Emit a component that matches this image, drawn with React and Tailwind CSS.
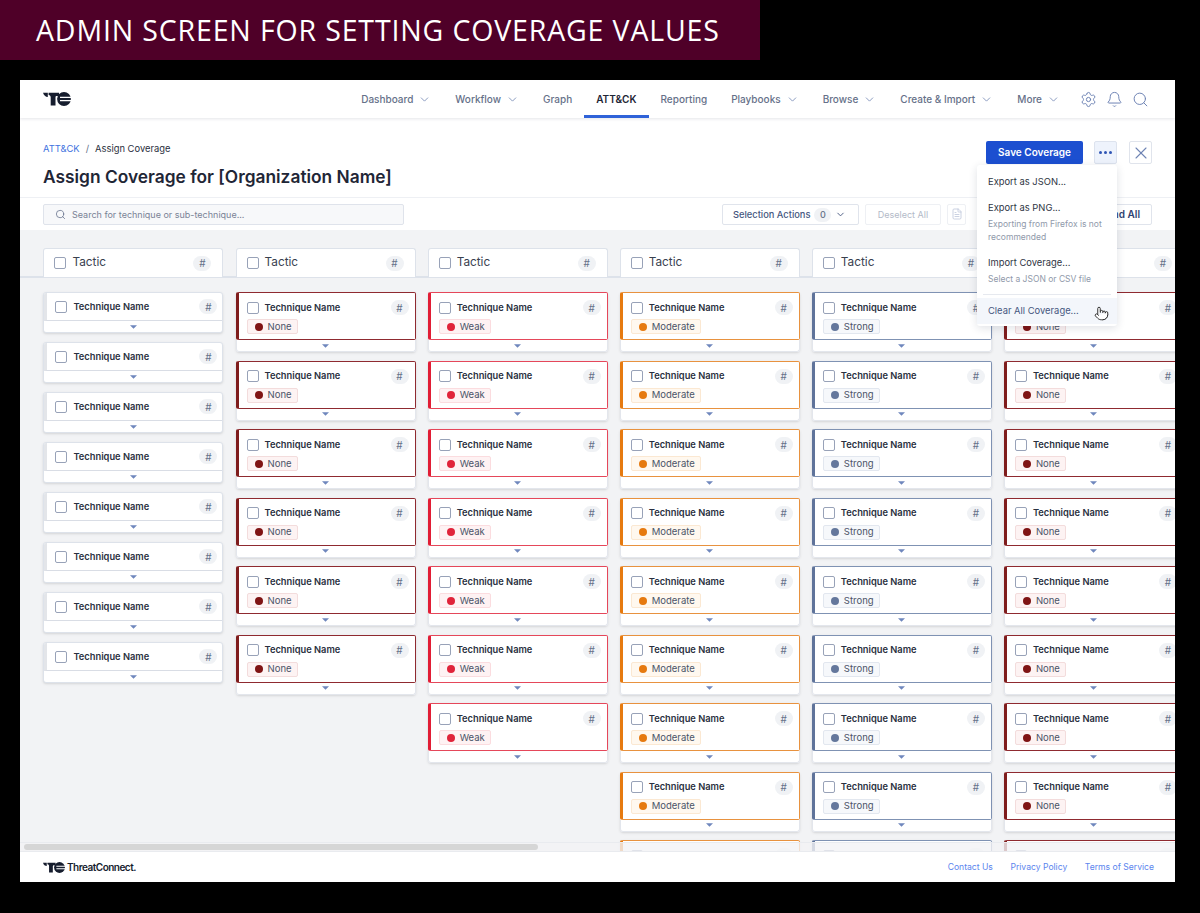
import { ChevronDown, Search, Settings, Bell, X, Pointer, FileText } from 'lucide-react';

const NAV = [
  { label: 'Dashboard', caret: true },
  { label: 'Workflow', caret: true },
  { label: 'Graph' },
  { label: 'ATT&CK', active: true },
  { label: 'Reporting' },
  { label: 'Playbooks', caret: true },
  { label: 'Browse', caret: true },
  { label: 'Create & Import', caret: true },
  { label: 'More', caret: true },
];

const LEVELS = {
  empty: null,
  None: {
    card: 'border-[#8f2a30]',
    bar: 'border-l-[#7f1d1d]',
    dot: 'bg-[#7f1414]',
    pill: 'bg-[#fdf3f3] border-[#f3dcdc]',
  },
  Weak: {
    card: 'border-[#e5475a]',
    bar: 'border-l-[#e11d35]',
    dot: 'bg-[#e0243a]',
    pill: 'bg-[#fef2f3] border-[#fbdcdf]',
  },
  Moderate: {
    card: 'border-[#e8923f]',
    bar: 'border-l-[#e67a10]',
    dot: 'bg-[#e67a10]',
    pill: 'bg-[#fff8ef] border-[#fbe8d2]',
  },
  Strong: {
    card: 'border-[#7f92b3]',
    bar: 'border-l-[#5f739a]',
    dot: 'bg-[#64779c]',
    pill: 'bg-[#f6f8fb] border-[#e2e7ef]',
  },
};

const COLUMNS = [
  { level: 'empty', count: 8 },
  { level: 'None', count: 6 },
  { level: 'Weak', count: 7 },
  { level: 'Moderate', count: 9 },
  { level: 'Strong', count: 9 },
  { level: 'None', count: 9 },
];

function Logo({ className }) {
  return (
    <svg viewBox="0 0 28 14" className={className}>
      <path fill="#161d2e" d="M0 .8h4.800v4.200C2.600 5 .8 3.400 0 .8z" />
      <path fill="#161d2e" d="M5.600 .8H16v3.200h-2.300c-.8 0-1.200.5-1.200 1.300V13.500H7.700V5.300C7.700 4 7 3.200 5.600 3z" />
      <circle fill="#161d2e" cx="21" cy="7" r="6.900" />
      <path fill="#ffffff" d="M17 4.700H29V5.900H17zM17 8.100H29V9.300H17z" />
    </svg>
  );
}

function Checkbox({ size = 'w-3 h-3' }) {
  return <span className={`${size} shrink-0 rounded-[2px] border border-[#98a2b8] bg-white`} />;
}

function Hash({ size = 'w-[18px] h-[15px]' }) {
  return (
    <span className={`${size} shrink-0 rounded-full bg-[#f0f2f5] flex items-center justify-center text-[10px] leading-none text-[#667189]`}>
      #
    </span>
  );
}

function Expander() {
  return (
    <svg viewBox="0 0 8 4" className="w-[7px] h-[4px]" fill="#6f87bd">
      <path d="M0 0h8L4 4z" />
    </svg>
  );
}

function TechniqueCard({ level }) {
  const style = LEVELS[level];

  if (!style) {
    return (
      <div className="h-[41px] flex flex-col rounded-[3px] bg-white border border-[#dde2ea] shadow-sm overflow-hidden">
        <div className="h-[28px] shrink-0 flex items-center border-l-[3px] border-l-[#e3e5e9] border-b border-b-[#d9dde5] pl-[8px] pr-[5px]">
          <Checkbox />
          <span className="ml-[6px] flex-1 text-[9.300px] font-semibold text-[#2a3040] whitespace-nowrap">Technique Name</span>
          <Hash />
        </div>
        <div className="flex-1 flex items-center justify-center">
          <Expander />
        </div>
      </div>
    );
  }

  return (
    <div className="h-[60px] flex flex-col rounded-[3px] bg-white shadow-sm shrink-0">
      <div className={`h-[48px] shrink-0 rounded-[2px] border border-l-[3px] ${style.card} ${style.bar} pl-[8px] pr-[6px] pt-[7px]`}>
        <div className="flex items-center h-[15px]">
          <Checkbox />
          <span className="ml-[6px] flex-1 text-[9.300px] font-semibold text-[#2a3040] whitespace-nowrap">Technique Name</span>
          <Hash />
        </div>
        <div className={`mt-[4px] flex w-fit items-center h-[15px] pl-[7px] pr-[5px] gap-[5px] rounded-[2px] border ${style.pill}`}>
          <span className={`w-2 h-2 rounded-full ${style.dot}`} />
          <span className="text-[9.500px] leading-none text-[#4b5468]">{level}</span>
        </div>
      </div>
      <div className="flex-1 flex items-center justify-center border-x border-b border-[#e3e6ec] rounded-b-[3px]">
        <Expander />
      </div>
    </div>
  );
}

function Column({ level, count }) {
  const items = Array.from({ length: count }, (_, i) => i);
  return (
    <div className="w-[180px] shrink-0 flex flex-col">
      <div className="h-[29px] shrink-0 flex items-center rounded-t-[3px] border border-b-0 border-[#dde2ea] bg-white pl-[10px] pr-[11px]">
        <Checkbox size="w-[12px] h-[12px]" />
        <span className="ml-[6px] flex-1 text-[11.800px] text-[#39414f]">Tactic</span>
        <Hash />
      </div>
      <div className={`mt-[15px] flex flex-col ${level === 'empty' ? 'gap-[9px]' : 'gap-[8.500px]'}`}>
        {items.map((i) => (
          <TechniqueCard key={i} level={level} />
        ))}
      </div>
    </div>
  );
}

function MenuItem({ title, note, hover }) {
  return (
    <div className={`px-[11px] whitespace-nowrap ${hover ? 'bg-[#f3f6fb] py-[7px] text-[#46577f]' : 'text-[#2f3644]'}`}>
      <div className="text-[9.400px] leading-[12px]">{title}</div>
      {note && <div className="mt-[4px] text-[8.500px] leading-[13px] text-[#9099aa]">{note}</div>}
    </div>
  );
}

export default function App() {
  return (
    <div className="w-[1200px] h-[913px] bg-black overflow-hidden font-['Inter',sans-serif]">
      <div className="w-[760px] h-[60px] bg-[#4f0028] pl-[36px] flex items-center">
        <span className="text-[28.500px] leading-none text-white whitespace-nowrap font-['Open_Sans',sans-serif] tracking-[0.85px]">
          ADMIN SCREEN FOR SETTING COVERAGE VALUES
        </span>
      </div>

      <div className="relative mt-[20px] ml-[20px] w-[1155px] h-[802px] bg-white overflow-hidden flex flex-col">
        {/* top nav */}
        <header className="relative z-10 h-[38px] shrink-0 bg-white shadow-[0_1px_3px_rgba(30,40,70,0.12)] flex items-center pl-[23px] pr-[26px]">
          <Logo className="w-[28px] h-[14px]" />
          <nav className="ml-auto flex items-stretch h-full">
            {NAV.map((item) => (
              <div
                key={item.label}
                className={`flex items-center gap-[5px] px-[12px] pt-[3px] text-[10px] font-medium border-b-[3px] ${
                  item.active ? 'border-[#2f62d8] text-[#1f2636] font-semibold' : 'border-transparent text-[#667189]'
                }`}
              >
                {item.label}
                {item.caret && <ChevronDown size={13} strokeWidth={1.5} className="text-[#7186b3]" />}
              </div>
            ))}
          </nav>
          <div className="flex items-center gap-[9px] ml-[8px] text-[#6e84b4]">
            <Settings size={17} strokeWidth={1.4} />
            <Bell size={17} strokeWidth={1.4} />
            <Search size={17} strokeWidth={1.4} />
          </div>
        </header>

        {/* page title */}
        <div className="h-[80px] shrink-0 border-b border-[#eef0f4] px-[23px] flex justify-between">
          <div className="pt-[25px]">
            <div className="flex items-center text-[9.400px] leading-[12px]">
              <span className="text-[#3f73e0]">ATT&amp;CK</span>
              <span className="mx-[6px] text-[#667189]">/</span>
              <span className="text-[#2a3040]">Assign Coverage</span>
            </div>
            <h1 className="mt-[11px] text-[17.350px] leading-[22px] font-semibold text-[#1f2636]">
              Assign Coverage for [Organization Name]
            </h1>
          </div>
          <div className="pt-[23px] flex items-start">
            <button className="h-[23px] w-[97px] rounded-[2px] bg-[#1c4fd0] text-white text-[10px] font-semibold">
              Save Coverage
            </button>
            <button className="ml-[11px] h-[23px] w-[23px] rounded-[2px] border border-[#dde3ee] bg-[#eef3fc] flex items-center justify-center gap-[2px]">
              <span className="w-[3px] h-[3px] rounded-full bg-[#2f55b5]" />
              <span className="w-[3px] h-[3px] rounded-full bg-[#2f55b5]" />
              <span className="w-[3px] h-[3px] rounded-full bg-[#2f55b5]" />
            </button>
            <button className="ml-[12px] h-[23px] w-[23px] rounded-[2px] border border-[#e0e4ec] bg-white flex items-center justify-center text-[#6e84b4]">
              <X size={20} strokeWidth={1.3} />
            </button>
          </div>
        </div>

        {/* toolbar */}
        <div className="h-[32px] shrink-0 flex items-center px-[23px] text-[9px] leading-[19px]">
          <div className="w-[361px] h-[21px] rounded-[2px] border border-[#dfe3eb] bg-[#f7f8fa] flex items-center pl-[11px] gap-[6px]">
            <Search size={11} strokeWidth={1.6} className="text-[#5d6a85]" />
            <span className="pt-[1px] text-[#7a8396]">Search for technique or sub-technique...</span>
          </div>
          <div className="ml-auto mr-[186px] flex items-center">
            <div className="w-[137px] h-[21px] rounded-[2px] border border-[#e0e4ec] flex items-center pl-[10px] pt-[1px] text-[9.300px] font-medium text-[#46577f] whitespace-nowrap">
              Selection Actions
              <span className="ml-[4px] w-[17px] h-[14px] rounded-full bg-[#f0f2f5] flex items-center justify-center text-[9px] text-[#667189]">0</span>
              <ChevronDown size={11} strokeWidth={2} className="ml-[4px] text-[#46577f]" />
            </div>
            <div className="ml-[6px] w-[76px] h-[21px] rounded-[2px] border border-[#eef0f4] flex items-center justify-center pt-[1px] text-[#b3bac8]">
              Deselect All
            </div>
            <div className="ml-[6px] w-[19px] h-[21px] rounded-[2px] border border-[#eef0f4] flex items-center justify-center text-[#b9c3d8]">
              <FileText size={12} strokeWidth={1.5} />
            </div>
          </div>
        </div>

        {/* board */}
        <div className="relative flex-1 bg-[#f2f3f5] overflow-hidden">
          <div className="absolute left-0 right-0 top-[46px] h-[2px] bg-[#dde2ea]" />
          <div className="relative pt-[18px] pl-[23.450px] flex gap-[12.100px]">
            {COLUMNS.map((col, i) => (
              <Column key={i} level={col.level} count={col.count} />
            ))}
          </div>
          <div className="absolute left-0 right-0 bottom-0 h-[10px] bg-[#f2f3f5]/80 border-t border-b border-[#e9ebef]">
            <div className="ml-[4px] mt-[1px] w-[514px] h-[6px] rounded-full bg-[#d6d6d6]" />
          </div>
        </div>

        {/* footer */}
        <footer className="h-[30px] shrink-0 bg-white flex items-center pl-[23px] pr-[21px]">
          <Logo className="w-[22px] h-[11px]" />
          <span className="ml-[2px] text-[10px] font-semibold tracking-[-0.5px] text-[#161d2e]">ThreatConnect.</span>
          <div className="ml-auto flex items-center gap-[17.500px] text-[8.600px] text-[#5b85ee]">
            <span>Contact Us</span>
            <span>Privacy Policy</span>
            <span>Terms of Service</span>
          </div>
        </footer>

        {/* expand all button, partly under the menu */}
        <div className="absolute left-[1049px] top-[124px] w-[83px] h-[21px] rounded-[2px] border border-[#e0e4ec] bg-white flex items-center justify-end pr-[11px] text-[10px] font-semibold text-[#2f4170]">
          Expand All
        </div>

        {/* dropdown menu */}
        <div className="absolute left-[957px] top-[85px] w-[140px] h-[161px] rounded-[3px] bg-white shadow-[0_2px_8px_rgba(30,40,70,0.14)] flex flex-col pt-[11px]">
          <MenuItem title="Export as JSON..." />
          <div className="mt-[14px]">
            <MenuItem title="Export as PNG..." note={<>Exporting from Firefox is not<br />recommended</>} />
          </div>
          <div className="mt-[13px]">
            <MenuItem title="Import Coverage..." note="Select a JSON or CSV file" />
          </div>
          <div className="mx-[6px] mt-[8px] border-t border-[#e6e9ef]" />
          <div className="mt-[3px]">
            <MenuItem title="Clear All Coverage..." hover />
          </div>
          <Pointer size={15} strokeWidth={1.5} className="absolute left-[117px] top-[141px] text-[#222] fill-white" />
        </div>
      </div>
    </div>
  );
}
